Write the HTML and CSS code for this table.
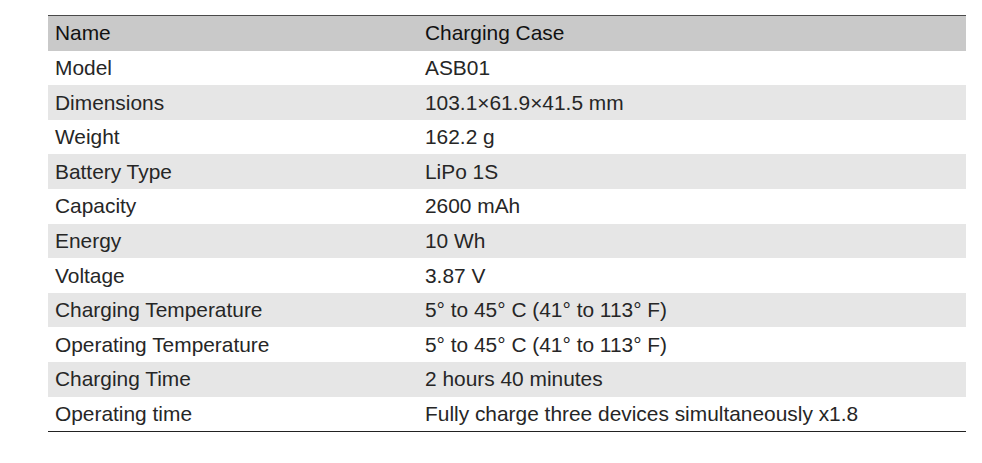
FILE: index.html
```html
<!DOCTYPE html>
<html>
<head>
<meta charset="utf-8">
<link rel="stylesheet" href="styles.css">
</head>
<body>
<table class="spec">
  <thead>
    <tr class="head"><th>Name</th><th>Charging Case</th></tr>
  </thead>
  <tbody>
    <tr><td>Model</td><td>ASB01</td></tr>
    <tr class="alt"><td>Dimensions</td><td>103.1×61.9×41.5 mm</td></tr>
    <tr><td>Weight</td><td>162.2 g</td></tr>
    <tr class="alt"><td>Battery Type</td><td>LiPo 1S</td></tr>
    <tr><td>Capacity</td><td>2600 mAh</td></tr>
    <tr class="alt"><td>Energy</td><td>10 Wh</td></tr>
    <tr><td>Voltage</td><td>3.87 V</td></tr>
    <tr class="alt"><td>Charging Temperature</td><td>5° to 45° C (41° to 113° F)</td></tr>
    <tr><td>Operating Temperature</td><td>5° to 45° C (41° to 113° F)</td></tr>
    <tr class="alt"><td>Charging Time</td><td>2 hours 40 minutes</td></tr>
    <tr><td>Operating time</td><td>Fully charge three devices simultaneously x1.8</td></tr>
  </tbody>
</table>
</body>
</html>
```
FILE: styles.css
```css
html, body {
  margin: 0;
  padding: 0;
  background: #ffffff;
}
body {
  padding: 15px 16px 0 48px;
  font-family: "Liberation Sans", Arial, Helvetica, sans-serif;
}
.spec {
  width: 918px;
  border-collapse: collapse;
  border-top: 1.5px solid #4a4a4a;
  border-bottom: 1.5px solid #222222;
  color: #262626;
  font-size: 20.9px;
}
.spec th, .spec td {
  height: 33.6px;
  padding: 1px 7px 0 7px;
  text-align: left;
  font-weight: normal;
  vertical-align: middle;
  line-height: 1;
  white-space: nowrap;
}
.spec th:first-child, .spec td:first-child {
  width: 356px;
}
.head {
  background: #c9c9c9;
}
.head th {
  color: #111111;
}
.alt {
  background: #e6e6e6;
}
```
